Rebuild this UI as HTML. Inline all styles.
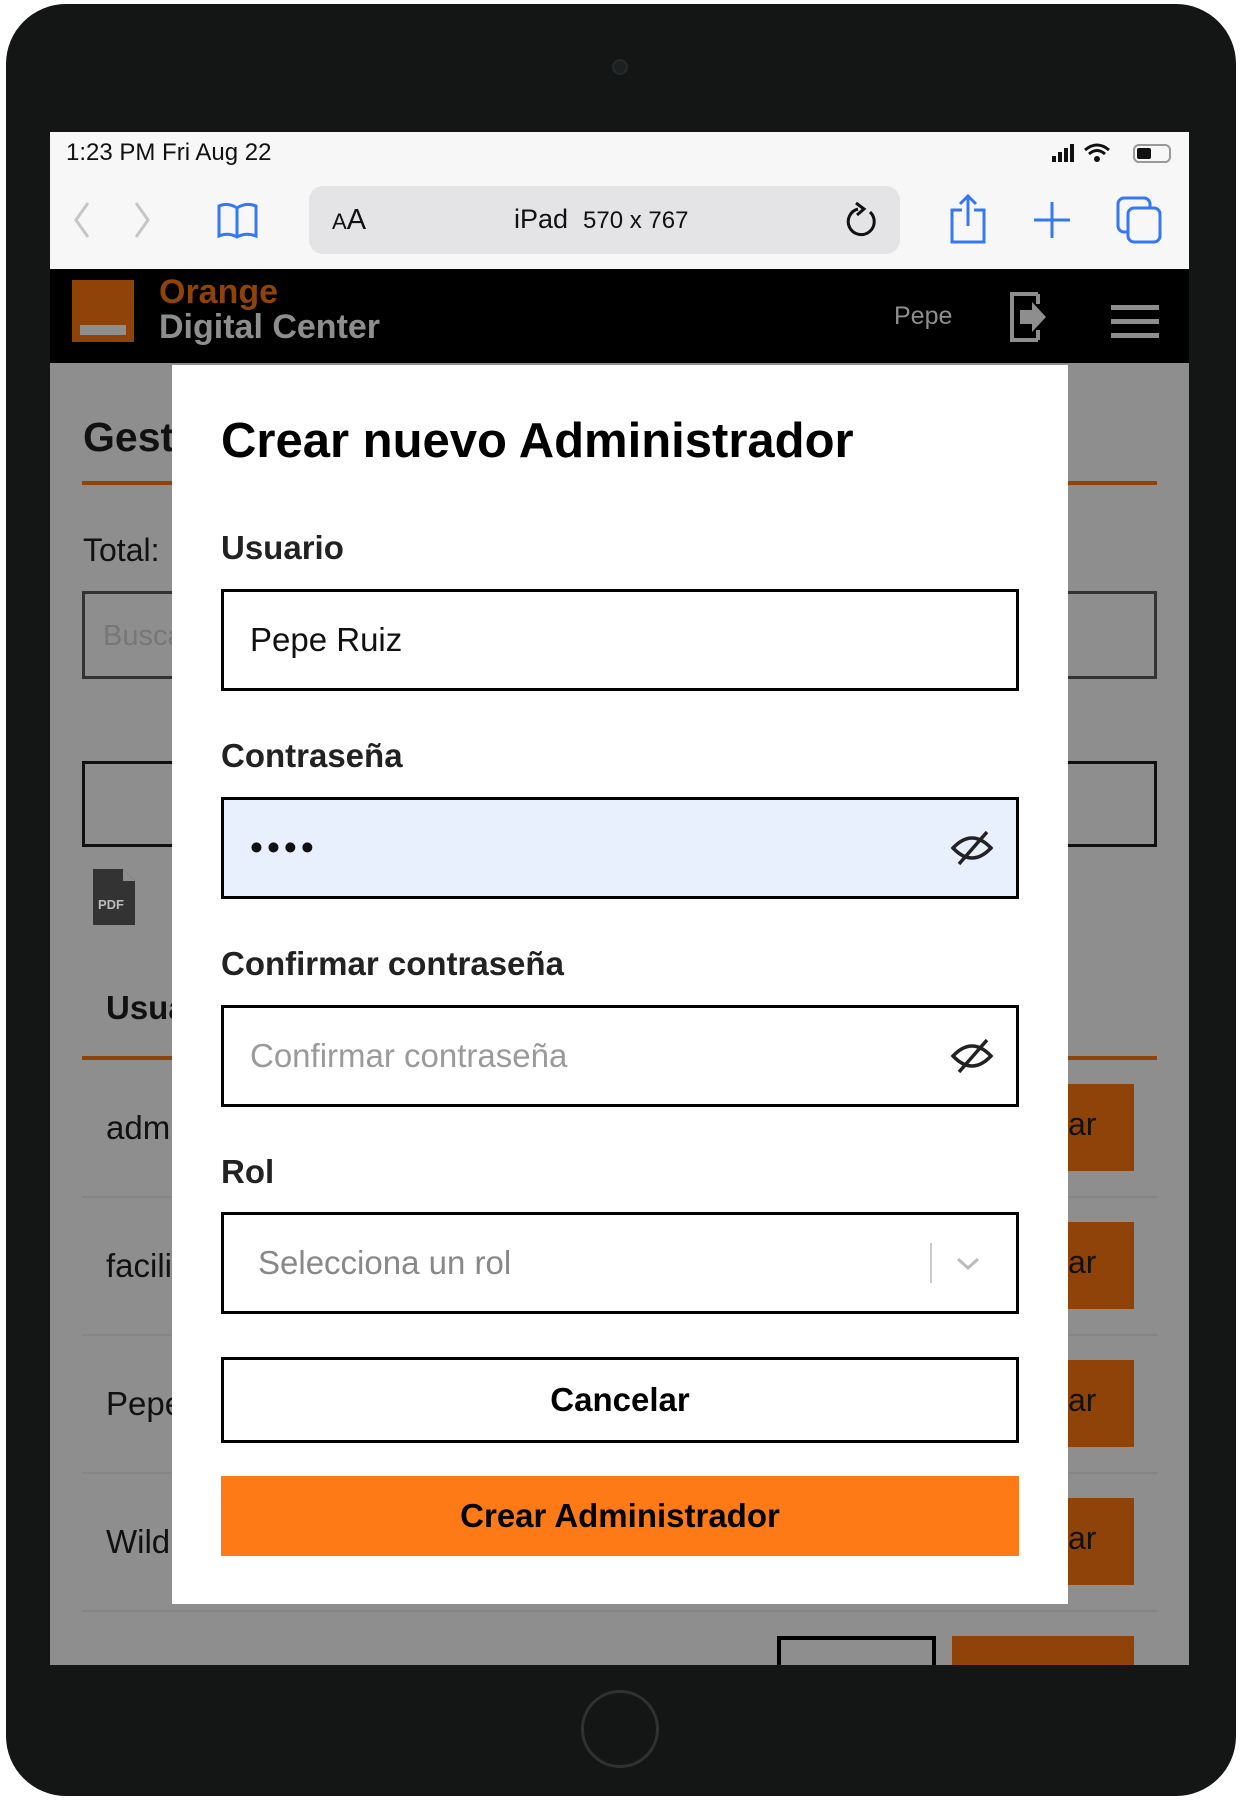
<!DOCTYPE html>
<html><head><meta charset="utf-8"><style>
*{box-sizing:border-box;margin:0;padding:0}
body{width:1240px;height:1800px;background:#fff;position:relative;overflow:hidden;font-family:"Liberation Sans",Arial,sans-serif}
.abs{position:absolute}
.dev{left:6px;top:4px;width:1230px;height:1792px;background:#141616;border-radius:60px}
.screen{left:50px;top:132px;width:1139px;height:1533px;background:#8e8e8e;overflow:hidden}
.lbl{position:absolute;left:221px;font-weight:bold;font-size:33px;color:#222}
.inp{position:absolute;left:221px;width:798px;height:102px;border:3px solid #000;background:#fff;font-size:33px;padding-left:26px;display:flex;align-items:center}
.ob{position:absolute;left:900px;width:184px;height:87px;background:#8f4308;font-size:32px;color:#111;padding:22px 0 0 118px}
</style></head><body>
<div class="abs dev"></div>
<div class="abs" style="left:612px;top:59px;width:16px;height:16px;border-radius:50%;background:#1d2020;border:2px solid #262a2a"></div>
<div class="abs" style="left:581px;top:1690px;width:78px;height:78px;border-radius:50%;border:3px solid #2e3232"></div>
<div class="abs screen">
 <div class="abs" style="left:0;top:0;width:1139px;height:137px;background:#f7f7f7"></div>
 <div class="abs" style="left:16px;top:7px;font-size:24px;color:#111">1:23 PM Fri Aug 22</div>
 <svg class="abs" style="left:1000px;top:8px" width="125" height="28" viewBox="0 0 125 28">
  <rect x="2" y="16" width="4" height="6" fill="#111"/><rect x="8" y="12" width="4" height="10" fill="#111"/><rect x="14" y="8" width="4" height="14" fill="#111"/><rect x="20" y="4" width="4" height="18" fill="#111"/>
  <path d="M35 10 Q47 0 59 10 M39 14 Q47 7 55 14" stroke="#111" stroke-width="3" fill="none"/><circle cx="47" cy="19" r="3" fill="#111"/>
  <rect x="84" y="5" width="36" height="17" rx="5" fill="none" stroke="#999" stroke-width="2"/><rect x="87" y="8" width="14" height="11" rx="2" fill="#111"/>
 </svg>
 <svg class="abs" style="left:18px;top:68px" width="100" height="40"><path d="M20 3 L8 20 L20 37" stroke="#c6c6c8" stroke-width="3" fill="none"/><path d="M68 3 L80 20 L68 37" stroke="#c6c6c8" stroke-width="3" fill="none"/></svg>
 <svg class="abs" style="left:166px;top:70px" width="44" height="38"><path d="M3 4 Q12 0 21 6 Q30 0 40 4 L40 34 Q30 30 21 35 Q12 30 3 34 Z M21 6 L21 35" stroke="#3478f6" stroke-width="3" fill="none"/></svg>
 <div class="abs" style="left:259px;top:54px;width:591px;height:68px;border-radius:14px;background:#e4e4e6"></div>
 <div class="abs" style="left:282px;top:72px;font-size:29px;color:#111"><span style="font-size:22px">A</span>A</div>
 <div class="abs" style="left:464px;top:72px;font-size:27px;color:#111">iPad&nbsp; <span style="font-size:24px">570 x 767</span></div>
 <svg class="abs" style="left:794px;top:68px" width="36" height="40"><path d="M26 12 A13 13 0 1 1 14 9" stroke="#111" stroke-width="3" fill="none"/><path d="M12 3 L20 9 L13 15" stroke="#111" stroke-width="3" fill="none"/></svg>
 <svg class="abs" style="left:898px;top:62px" width="40" height="50"><path d="M14 16 L4 16 L4 48 L36 48 L36 16 L26 16 M20 32 L20 2 M12 10 L20 2 L28 10" stroke="#3478f6" stroke-width="3" fill="none"/></svg>
 <svg class="abs" style="left:982px;top:68px" width="40" height="40"><path d="M20 2 V38 M2 20 H38" stroke="#3478f6" stroke-width="3"/></svg>
 <svg class="abs" style="left:1066px;top:64px" width="48" height="48"><rect x="2" y="2" width="32" height="34" rx="6" stroke="#3478f6" stroke-width="3" fill="none"/><rect x="12" y="12" width="32" height="34" rx="6" stroke="#3478f6" stroke-width="3" fill="#f7f7f7"/></svg>
 <div class="abs" style="left:0;top:137px;width:1139px;height:94px;background:#000"></div>
 <div class="abs" style="left:22px;top:148px;width:62px;height:62px;background:#8f4308"></div>
 <div class="abs" style="left:30px;top:193px;width:46px;height:10px;background:#8e8e8e"></div>
 <div class="abs" style="left:109px;top:141px;font-size:34px;font-weight:bold;color:#8f4308">Orange</div>
 <div class="abs" style="left:109px;top:176px;font-size:34px;font-weight:bold;color:#8e8e8e">Digital Center</div>
 <div class="abs" style="left:844px;top:170px;font-size:25px;color:#8e8e8e">Pepe</div>
 <svg class="abs" style="left:958px;top:158px" width="42" height="54"><path d="M30 4 H4 V50 H30 M30 4 V14 M30 40 V50" stroke="#8e8e8e" stroke-width="4" fill="none"/><path d="M12 20 H24 V12 L38 27 L24 42 V34 H12 Z" fill="#8e8e8e"/></svg>
 <div class="abs" style="left:1061px;top:173px;width:48px;height:5px;background:#8e8e8e;box-shadow:0 14px 0 #8e8e8e,0 28px 0 #8e8e8e"></div>
 <div class="abs" style="left:33px;top:282px;font-size:41px;font-weight:bold;color:#111">Gestión</div>
 <div class="abs" style="left:32px;top:349px;width:1075px;height:4px;background:#8f4308"></div>
 <div class="abs" style="left:33px;top:400px;font-size:32px;color:#111">Total:</div>
 <div class="abs" style="left:32px;top:459px;width:1075px;height:88px;border:3px solid #333;font-size:29px;color:#777;padding:26px 18px">Buscar</div>
 <div class="abs" style="left:32px;top:629px;width:1075px;height:86px;border:3px solid #111"></div>
 <svg class="abs" style="left:43px;top:737px" width="42" height="56"><path d="M0 0 H30 L42 12 V56 H0 Z" fill="#333"/><path d="M30 0 V12 H42" fill="#8e8e8e"/><text x="5" y="40" font-size="13" font-family="Liberation Sans" font-weight="bold" fill="#bbb">PDF</text></svg>
 <div class="abs" style="left:56px;top:857px;font-size:33px;font-weight:bold;color:#111">Usuario</div>
 <div class="abs" style="left:32px;top:924px;width:1075px;height:4px;background:#8f4308"></div>
 <div class="abs" style="left:56px;top:977px;font-size:33px;color:#111">admin</div>
 <div class="abs" style="left:56px;top:1115px;font-size:33px;color:#111">facilitador</div>
 <div class="abs" style="left:56px;top:1253px;font-size:33px;color:#111">Pepe</div>
 <div class="abs" style="left:56px;top:1391px;font-size:33px;color:#111">Wild</div>
 <div class="abs" style="left:32px;top:1064px;width:1075px;height:2px;background:#858585;box-shadow:0 138px 0 #858585,0 276px 0 #858585,0 414px 0 #858585"></div>
 <div class="ob" style="top:952px">ar</div>
 <div class="ob" style="top:1090px">ar</div>
 <div class="ob" style="top:1228px">ar</div>
 <div class="ob" style="top:1366px">ar</div>
 <div class="abs" style="left:727px;top:1504px;width:159px;height:60px;border:4px solid #000"></div>
 <div class="abs" style="left:902px;top:1504px;width:182px;height:60px;background:#8f4308"></div>
 <div class="abs" style="left:122px;top:233px;width:896px;height:1239px;background:#fff"></div>
</div>
<div class="abs" style="left:221px;top:413px;font-size:49px;font-weight:bold;color:#000">Crear nuevo Administrador</div>
<div class="lbl" style="top:529px">Usuario</div>
<div class="inp" style="top:589px;color:#111">Pepe Ruiz</div>
<div class="lbl" style="top:737px">Contraseña</div>
<div class="inp" style="top:797px;background:#e8f0fe;color:#111;font-size:37px;letter-spacing:4px">••••</div>
<div class="lbl" style="top:945px">Confirmar contraseña</div>
<div class="inp" style="top:1005px;color:#9a9a9a">Confirmar contraseña</div>
<svg class="abs" style="left:950px;top:828px" width="44" height="40"><path d="M3 20 Q22 0 41 20 Q22 40 3 20 Z" stroke="#222" stroke-width="3.5" fill="none"/><path d="M9 36 L37 4" stroke="#222" stroke-width="3.5"/></svg>
<svg class="abs" style="left:950px;top:1036px" width="44" height="40"><path d="M3 20 Q22 0 41 20 Q22 40 3 20 Z" stroke="#222" stroke-width="3.5" fill="none"/><path d="M9 36 L37 4" stroke="#222" stroke-width="3.5"/></svg>
<div class="lbl" style="top:1153px">Rol</div>
<div class="inp" style="top:1212px;color:#888;padding-left:34px">Selecciona un rol</div>
<div class="abs" style="left:930px;top:1243px;width:2px;height:40px;background:#ccc"></div>
<svg class="abs" style="left:956px;top:1256px" width="24" height="16"><path d="M2 3 L12 12 L22 3" stroke="#bbb" stroke-width="3" fill="none"/></svg>
<div class="inp" style="top:1357px;height:86px;justify-content:center;padding:0;font-weight:bold;color:#000">Cancelar</div>
<div class="abs" style="left:221px;top:1476px;width:798px;height:80px;background:#fd7a16;display:flex;align-items:center;justify-content:center;font-size:33px;font-weight:bold;color:#000">Crear Administrador</div>
</body></html>
